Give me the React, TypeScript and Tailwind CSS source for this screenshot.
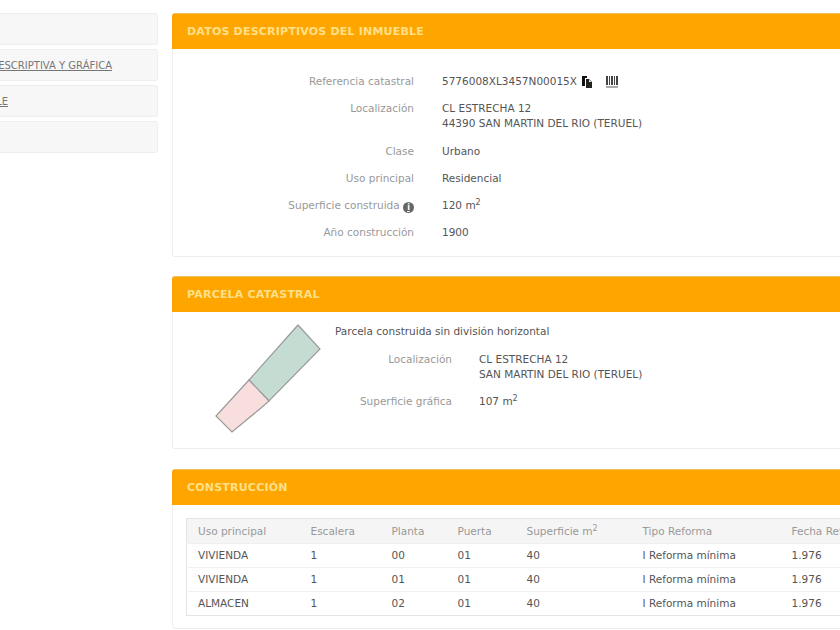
const sideItems = [
  { id: 1, text: "" },
  { id: 2, text: "CONSULTA DESCRIPTIVA Y GRÁFICA", link: true },
  { id: 3, text: "CATASTRO DE INMUEBLE", link: true, short: true },
  { id: 4, text: "" },
];

const rows = [
  { uso: "VIVIENDA", planta: "00" },
  { uso: "VIVIENDA", planta: "01" },
  { uso: "ALMACEN", planta: "02" },
];

const Panel = ({ title, children, className }: { title: string; children: React.ReactNode; className: string }) => (
  <section className={`w-[720px] shrink-0 border border-[#eeeeee] rounded-[3px] bg-white ${className}`}>
    <h2 className="h-9 -m-px flex items-center pl-[15px] bg-[#ffa500] text-[#ffe08a] text-[11px] font-bold tracking-[0.2px] rounded-t-[3px] border-t border-[#f2c35c]">
      {title}
    </h2>
    {children}
  </section>
);

const Info = ({ label, children, tall }: { label: React.ReactNode; children: React.ReactNode; tall?: boolean }) => (
  <div className={`flex ${tall ? "h-[43px]" : "h-[27px]"}`}>
    <div className="w-[241px] text-right text-[#999999] pt-[5px]">{label}</div>
    <div className="ml-[28px] text-[#555555] pt-[5px] leading-[15px]">{children}</div>
  </div>
);

const Sup = () => <sup className="text-[8px] leading-none -top-[4px] align-baseline relative">2</sup>;

export default function App() {
  return (
    <div className="w-[840px] h-[630px] overflow-hidden bg-white flex font-['DejaVu_Sans',sans-serif] text-[10.5px] leading-[15px]">
      <aside className="w-[158px] shrink-0 pt-[13px] flex flex-col gap-1 overflow-hidden">
        {sideItems.map((item) => (
          <div
            key={item.id}
            className="h-[32px] flex items-center justify-end bg-[#f7f7f7] border border-[#eeeeee] border-l-0 rounded-r-[3px] whitespace-nowrap text-[#777777] text-[10px]"
          >
            {item.link && (
              <a className={`underline ${item.short ? "pr-[149px]" : "pr-[45px]"}`}>{item.text}</a>
            )}
          </div>
        ))}
      </aside>

      <main className="ml-[14px] pt-[13px] flex flex-col">
        <Panel title="DATOS DESCRIPTIVOS DEL INMUEBLE" className="h-[244px]">
          <div className="pt-[21px]">
            <Info label="Referencia catastral">
              <span className="flex items-center">
                5776008XL3457N00015X
                <svg viewBox="0 0 12 12" className="w-3 h-3 ml-[4px]">
                  <path d="M1 0h5v2H4v8H1z" fill="#111" />
                  <path d="M5 3h3l3 3v6H5z" fill="#222" />
                  <path d="M8 3.8V6h2.4z" fill="#fff" />
                </svg>
                <svg viewBox="0 0 12 12" className="w-3 h-3 ml-[13px]">
                  <path d="M0 0h2v9H0zM3 0h1v9H3zM5 0h2v9H5zM8 0h1v9H8zM10 0h2v9h-2z" fill="#444" />
                  <path d="M0 10h12v2H0z" fill="#aaa" />
                </svg>
              </span>
            </Info>
            <Info label="Localización" tall>
              CL ESTRECHA 12
              <br />
              44390 SAN MARTIN DEL RIO (TERUEL)
            </Info>
            <Info label="Clase">Urbano</Info>
            <Info label="Uso principal">Residencial</Info>
            <Info
              label={
                <span>
                  Superficie construida{" "}
                  <span className="inline-block w-[11px] h-[11px] rounded-full bg-[#666666] text-white text-[8px] leading-[11px] text-center font-bold underline align-[-1px]">
                    i
                  </span>
                </span>
              }
            >
              120 m<Sup />
            </Info>
            <Info label="Año construcción">1900</Info>
          </div>
        </Panel>

        <Panel title="PARCELA CATASTRAL" className="h-[173px] mt-[19px]">
          <div className="flex">
            <svg viewBox="0 0 112 114" className="w-[112px] h-[114px] ml-[40px] mt-[12px] shrink-0">
              <path d="M85 2 107 26 56 78 36 57z" fill="#c5dcd3" stroke="#9a9a9a" strokeWidth="1.2" />
              <path d="M36 57 56 78 48 85 19 109 3 93z" fill="#f8dedd" stroke="#9a9a9a" strokeWidth="1.2" />
            </svg>
            <div className="ml-[10px] pt-[13px] text-[#555555]">
              <p className="h-[28px]">Parcela construida sin división horizontal</p>
              <div className="flex h-[42px]">
                <div className="w-[117px] text-right text-[#999999]">Localización</div>
                <div className="ml-[27px]">
                  CL ESTRECHA 12
                  <br />
                  SAN MARTIN DEL RIO (TERUEL)
                </div>
              </div>
              <div className="flex">
                <div className="w-[117px] text-right text-[#999999]">Superficie gráfica</div>
                <div className="ml-[27px]">
                  107 m<Sup />
                </div>
              </div>
            </div>
          </div>
        </Panel>

        <Panel title="CONSTRUCCIÓN" className="h-[160px] mt-[20px]">
          <div className="pt-[14px] pl-[13px]">
            <table className="w-[690px] table-fixed border border-[#e4e4e4] text-left text-[#555555]">
              <thead className="bg-[#f5f5f5] text-[#999999]">
                <tr className="h-[25px]">
                  <th className="w-[113px] pl-[11px] font-normal">Uso principal</th>
                  <th className="w-[81px] pl-[11px] font-normal">Escalera</th>
                  <th className="w-[66px] pl-[11px] font-normal">Planta</th>
                  <th className="w-[69px] pl-[11px] font-normal">Puerta</th>
                  <th className="w-[116px] pl-[11px] font-normal">
                    Superficie m<Sup />
                  </th>
                  <th className="w-[149px] pl-[11px] font-normal">Tipo Reforma</th>
                  <th className="pl-[11px] font-normal whitespace-nowrap">Fecha Reforma</th>
                </tr>
              </thead>
              <tbody>
                {rows.map((row, i) => (
                  <tr key={i} className="h-[24px] border-t border-[#f0f0f0]">
                    <td className="pl-[11px]">{row.uso}</td>
                    <td className="pl-[11px]">1</td>
                    <td className="pl-[11px]">{row.planta}</td>
                    <td className="pl-[11px]">01</td>
                    <td className="pl-[11px]">40</td>
                    <td className="pl-[11px]">I Reforma mínima</td>
                    <td className="pl-[11px]">1.976</td>
                  </tr>
                ))}
              </tbody>
            </table>
          </div>
        </Panel>
      </main>
    </div>
  );
}
